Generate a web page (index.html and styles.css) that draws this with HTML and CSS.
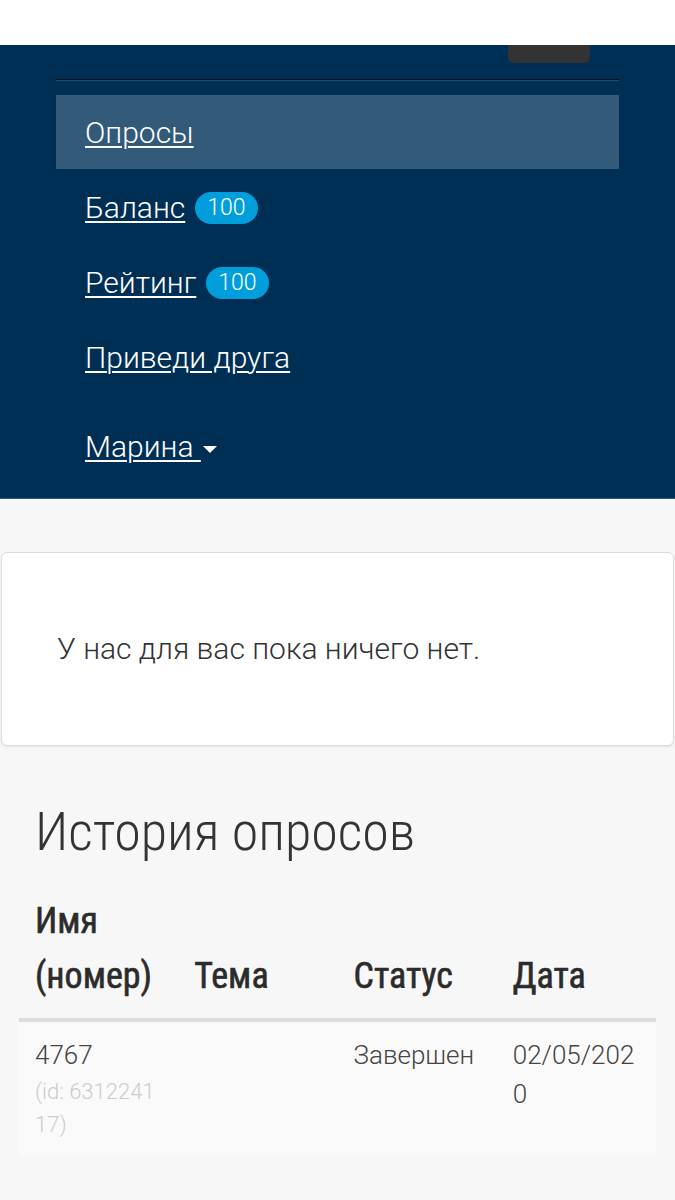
FILE: index.html
```html
<!DOCTYPE html>
<html lang="ru">
<head>
<meta charset="utf-8">
<title>Опросы</title>
<link rel="stylesheet" href="styles.css">
</head>
<body>
<div class="topbar"></div>
<nav class="navbar">
  <div class="navbar-header">
    <button class="toggler" type="button"></button>
  </div>
  <ul class="nav">
    <li class="nav-item active"><a href="#">Опросы</a></li>
    <li class="nav-item"><a href="#">Баланс</a><span class="badge">100</span></li>
    <li class="nav-item"><a href="#">Рейтинг</a><span class="badge">100</span></li>
    <li class="nav-item"><a href="#">Приведи друга</a></li>
    <li class="nav-item user"><a href="#">Марина <span class="caret"></span></a></li>
  </ul>
</nav>
<main class="content">
  <div class="card">
    <p>У нас для вас пока ничего нет.</p>
  </div>
  <section class="history">
    <h2>История опросов</h2>
    <table class="table">
      <thead>
        <tr>
          <th>Имя (номер)</th>
          <th>Тема</th>
          <th>Статус</th>
          <th>Дата</th>
        </tr>
      </thead>
      <tbody>
        <tr>
          <td><div class="num">4767</div><div class="id">(id: 631224117)</div></td>
          <td></td>
          <td><div class="num">Завершен</div></td>
          <td><div class="num">02/05/2020</div></td>
        </tr>
      </tbody>
    </table>
  </section>
</main>
</body>
</html>
```
FILE: styles.css
```css
* { box-sizing: border-box; }
html, body {
  margin: 0;
  padding: 0;
}
body {
  background: #f7f7f8;
  font-family: Roboto, "Noto Sans", sans-serif;
  font-weight: 300;
  color: #333;
}
.topbar {
  height: 45px;
  background: #fff;
}
.navbar {
  background: #002f56;
  border-bottom: 1px solid #2b5a82;
  padding-bottom: 15px;
}
.navbar-header {
  display: flex;
  justify-content: flex-end;
  padding-right: 85px;
  height: 34px;
}
.toggler {
  width: 82px;
  height: 18px;
  border: 0;
  padding: 0;
  background: #333333;
  border-radius: 0 0 6px 6px;
}
.nav {
  list-style: none;
  margin: 0 56px;
  padding: 15px 0 0;
  border-top: 1px solid #0b0f14;
  box-shadow: inset 0 1px 0 #1e4a70;
}
.nav-item {
  display: flex;
  align-items: center;
  padding: 15px 29px 14px;
  font-size: 30px;
  line-height: 45px;
}
.nav-item + .nav-item {
  padding-top: 16px;
}
.nav-item.active {
  background: #335a78;
}
.nav-item a {
  color: #fff;
  text-decoration: underline;
  text-decoration-thickness: 2px;
  text-underline-offset: 3px;
}
.nav-item.user {
  margin-top: 14px;
}
.badge {
  display: inline-flex;
  align-items: center;
  height: 32px;
  margin-left: 10px;
  padding: 0 12px;
  border-radius: 16px;
  background: #009fdb;
  color: #fff;
  font-size: 23px;
  font-weight: 300;
  line-height: 32px;
}
.caret {
  display: inline-block;
  width: 0;
  height: 0;
  margin-left: 2px;
  vertical-align: middle;
  border-left: 7px solid transparent;
  border-right: 7px solid transparent;
  border-top: 7px solid #fff;
}
.content {
  padding-top: 53px;
}
.card {
  margin: 0 1px;
  background: #fff;
  border: 1px solid #dcdcdc;
  border-radius: 6px;
  box-shadow: 0 1px 2px rgba(0,0,0,0.08);
  padding: 75px 55px;
}
.card p {
  margin: 0;
  font-size: 30px;
  line-height: 42px;
  color: #333;
}
.history {
  padding: 54px 19px 40px;
}
.history h2 {
  margin: 0 0 14px 16px;
  font-family: "Roboto Condensed", Roboto, sans-serif;
  font-size: 54px;
  font-weight: 300;
  line-height: 64px;
  color: #333;
}
.table {
  width: 100%;
  border-collapse: collapse;
  table-layout: fixed;
}
.table th {
  text-align: left;
  vertical-align: bottom;
  font-family: "Roboto Condensed", Roboto, sans-serif;
  font-size: 36px;
  font-weight: 400;
  line-height: 55px;
  padding: 16px 16px 14px;
  color: #2b2b2b;
  -webkit-text-stroke: 0.6px #2b2b2b;
  border-bottom: 4px solid #dddddd;
}
.table td {
  vertical-align: top;
  padding: 14px 16px;
  background: #fafafa;
  word-break: break-all;
}
.num {
  font-size: 26px;
  line-height: 39px;
  color: #444;
}
.id {
  font-size: 22px;
  line-height: 33px;
  color: #cccccc;
}
```
